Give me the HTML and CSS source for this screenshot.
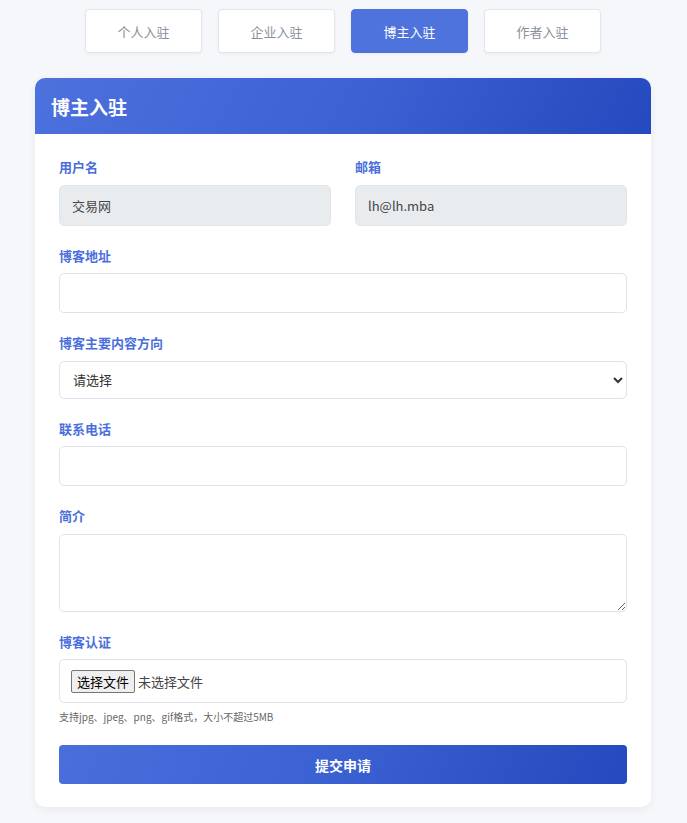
FILE: index.html
```html
<!DOCTYPE html>
<html lang="zh-CN">
<head>
  <meta charset="UTF-8">
  <title>博主入驻</title>
  <link rel="stylesheet" href="styles.css">
</head>
<body>

  <div class="tabs">
    <button class="tab">个人入驻</button>
    <button class="tab">企业入驻</button>
    <button class="tab active">博主入驻</button>
    <button class="tab">作者入驻</button>
  </div>

  <div class="card">
    <div class="card-header">博主入驻</div>

    <form class="card-body" onsubmit="return false;">
      <div class="row">
        <div class="form-group">
          <label class="form-label">用户名</label>
          <input type="text" class="form-control" value="交易网" disabled>
        </div>
        <div class="form-group">
          <label class="form-label">邮箱</label>
          <input type="text" class="form-control" value="lh@lh.mba" disabled>
        </div>
      </div>

      <div class="form-group">
        <label class="form-label">博客地址</label>
        <input type="text" class="form-control">
      </div>

      <div class="form-group">
        <label class="form-label">博客主要内容方向</label>
        <select class="form-control form-select">
          <option>请选择</option>
          <option>科技</option>
          <option>财经</option>
          <option>生活</option>
        </select>
      </div>

      <div class="form-group">
        <label class="form-label">联系电话</label>
        <input type="text" class="form-control">
      </div>

      <div class="form-group">
        <label class="form-label">简介</label>
        <textarea class="form-control form-textarea"></textarea>
      </div>

      <div class="form-group upload-group">
        <label class="form-label">博客认证</label>
        <label class="form-control file-box">
          <input type="file" class="file-input" accept=".jpg,.jpeg,.png,.gif">
          <span class="file-btn">选择文件</span>
          <span class="file-name">未选择文件</span>
        </label>
        <div class="form-hint">支持jpg、jpeg、png、gif格式，大小不超过5MB</div>
      </div>

      <button type="submit" class="submit-btn">提交申请</button>
    </form>
  </div>

</body>
</html>
```

FILE: styles.css
```css
body {
  margin: 0;
  padding: 9px 36px 16px 35px;
  background-color: #f6f7fb;
  font-family: "Noto Sans CJK SC", "Noto Sans", "Liberation Sans", sans-serif;
  color: #333;
}

.tabs {
  display: flex;
  justify-content: center;
  gap: 16px;
  margin-bottom: 25px;
}

.tab {
  width: 117px;
  height: 44px;
  font-family: inherit;
  font-size: 13px;
  color: #8a8f9c;
  background: #fff;
  border: 1px solid #e4e6ee;
  border-radius: 4px;
  box-shadow: 0 1px 3px rgba(0, 0, 0, 0.05);
  cursor: pointer;
}

.tab.active {
  background: #4f73dd;
  border-color: #4f73dd;
  color: #fff;
}

.card {
  background: #fff;
  border-radius: 10px;
  box-shadow: 0 2px 10px rgba(0, 0, 0, 0.06);
  overflow: hidden;
}

.card-header {
  height: 56px;
  padding: 0 16px;
  display: flex;
  align-items: center;
  background: linear-gradient(120deg, #4d72de 0%, #3a60d2 55%, #2549be 100%);
  color: #fff;
  font-size: 19px;
  font-weight: bold;
}

.card-body {
  padding: 23px 24px 23px;
}

.row {
  display: grid;
  grid-template-columns: 1fr 1fr;
  gap: 24px;
}

.form-group {
  margin-bottom: 20px;
}

.form-label {
  display: block;
  font-size: 13px;
  line-height: 1.5;
  font-weight: bold;
  color: #4a6fdc;
  margin-bottom: 8px;
}

.form-control {
  display: block;
  box-sizing: border-box;
  width: 100%;
  height: 40px;
  padding: 0 12px;
  font-family: inherit;
  font-size: 13px;
  color: #333;
  background: #fff;
  border: 1px solid #e1e2f0;
  border-radius: 5px;
  outline: none;
}

.form-control:disabled {
  height: 41px;
  background: #e9ecef;
  border-color: #e2e5ea;
  color: #444;
}

.form-select {
  height: 38px;
  padding: 0 8px 0 9px;
}

.form-textarea {
  height: 78px;
  padding: 8px 12px;
  resize: vertical;
}

.file-box {
  height: 44px;
  display: flex;
  align-items: center;
  gap: 3px;
  padding: 0 11px;
  cursor: pointer;
}

.file-input {
  display: none;
}

.file-btn {
  padding: 1px 5px;
  font-size: 13px;
  color: #000;
  background: #efefef;
  border: 1px solid #767676;
  border-radius: 2px;
}

.file-name {
  font-size: 13px;
  color: #444;
}

.upload-group .form-control {
  margin-bottom: 6px;
}

.form-hint {
  font-size: 10px;
  line-height: 16px;
  color: #666;
}

.submit-btn {
  display: block;
  width: 100%;
  height: 39px;
  font-family: inherit;
  font-size: 14px;
  font-weight: bold;
  color: #fff;
  background: linear-gradient(110deg, #4a6fdc 0%, #3a60d2 50%, #2549be 100%);
  border: none;
  border-radius: 4px;
  cursor: pointer;
}
```
